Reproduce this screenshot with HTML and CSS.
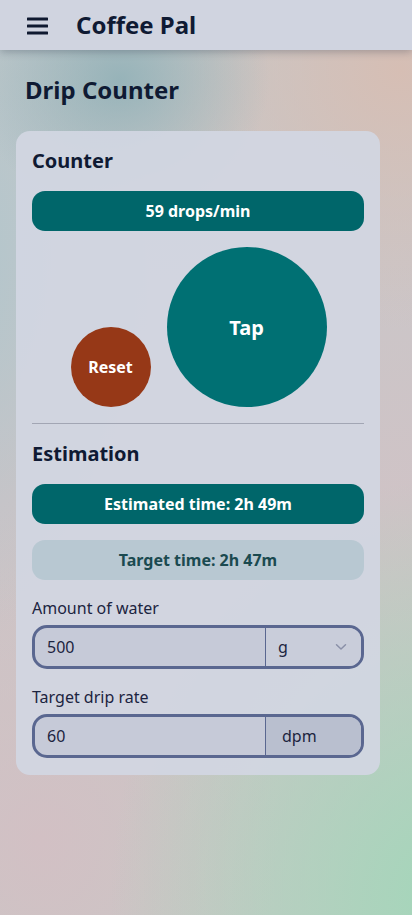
FILE: index.html
```html
<!DOCTYPE html>
<html lang="en">
<head>
<meta charset="utf-8">
<meta name="viewport" content="width=device-width, initial-scale=1">
<title>Coffee Pal</title>
<link rel="stylesheet" href="styles.css">
</head>
<body>
<header class="appbar">
  <svg class="menu-icon" width="21" height="18" viewBox="0 0 21 18" aria-hidden="true">
    <rect x="0" y="0.5" width="21" height="3" rx="0.6"/>
    <rect x="0" y="7.5" width="21" height="3" rx="0.6"/>
    <rect x="0" y="14.5" width="21" height="3" rx="0.6"/>
  </svg>
  <span class="app-title">Coffee Pal</span>
</header>
<main class="page">
  <h1 class="page-title">Drip Counter</h1>
  <section class="card">
    <h2 class="section-title">Counter</h2>
    <div class="pill pill-dark">59 drops/min</div>
    <div class="buttons">
      <button class="circle reset">Reset</button>
      <button class="circle tap">Tap</button>
    </div>
    <hr class="divider">
    <h2 class="section-title">Estimation</h2>
    <div class="pill pill-dark">Estimated time: 2h 49m</div>
    <div class="pill pill-light">Target time: 2h 47m</div>
    <div class="field">
      <label class="field-label">Amount of water</label>
      <div class="input-group">
        <span class="input-value">500</span>
        <span class="input-select">g
          <svg class="chevron" width="12" height="8" viewBox="0 0 12 8" aria-hidden="true"><path d="M1.5 1.8 L6 6 L10.5 1.8" fill="none" stroke="#8a90a8" stroke-width="1.5" stroke-linecap="round" stroke-linejoin="round"/></svg>
        </span>
      </div>
    </div>
    <div class="field">
      <label class="field-label">Target drip rate</label>
      <div class="input-group">
        <span class="input-value">60</span>
        <span class="input-addon">dpm</span>
      </div>
    </div>
  </section>
</main>
</body>
</html>
```
FILE: styles.css
```css
* { box-sizing: border-box; }

html, body {
  margin: 0;
  padding: 0;
}

body {
  width: 412px;
  min-height: 915px;
  font-family: "Noto Sans", "Open Sans", sans-serif;
  color: #111a36;
  background-color: #cdc6c9;
  background-image:
    radial-gradient(ellipse 150px 130px at 120px 80px, rgba(148, 178, 184, 0.95), rgba(148, 178, 184, 0) 100%),
    radial-gradient(ellipse 260px 260px at 400px 70px, rgba(214, 190, 180, 1), rgba(214, 190, 180, 0) 100%),
    radial-gradient(ellipse 180px 380px at -30px 260px, rgba(178, 198, 204, 1), rgba(178, 198, 204, 0) 100%),
    radial-gradient(ellipse 330px 420px at 440px 900px, rgba(164, 214, 186, 1), rgba(164, 214, 186, 0) 100%),
    radial-gradient(ellipse 240px 280px at 40px 840px, rgba(210, 192, 196, 1), rgba(210, 192, 196, 0) 100%),
    linear-gradient(180deg, #c6c9ca 0%, #cfc3c6 55%, #c9c8c6 100%);
}

.appbar {
  height: 50px;
  display: flex;
  align-items: center;
  gap: 28px;
  padding-left: 27px;
  background: #d0d4e0;
  box-shadow: 0 2px 8px rgba(40, 50, 70, 0.3);
  position: relative;
  z-index: 1;
}

.menu-icon {
  fill: #0f1930;
  flex: none;
  margin-top: 1px;
}

.app-title {
  font-size: 24px;
  font-weight: 700;
  color: #0f1a33;
  line-height: 1;
  margin-top: -1px;
}

.page {
  padding: 0 16px;
}

.page-title {
  margin: 0;
  padding: 24px 0 0 9px;
  font-size: 24px;
  font-weight: 700;
  line-height: 32px;
  color: #0f1a33;
  height: 81px;
}

.card {
  width: 364px;
  background: rgba(210, 214, 226, 0.93);
  border-radius: 14px;
  padding: 16px 16px 17px;
  display: flex;
  flex-direction: column;
  gap: 16px;
}

.section-title {
  margin: 0;
  font-size: 20px;
  font-weight: 700;
  line-height: 28px;
  color: #0f1a33;
}

.pill {
  height: 40px;
  border-radius: 13px;
  display: flex;
  align-items: center;
  justify-content: center;
  font-size: 16px;
  font-weight: 700;
}

.pill-dark {
  background: #00666a;
  color: #ffffff;
}

.pill-light {
  background: #b8c8d2;
  color: #1b4a50;
}

.buttons {
  display: flex;
  justify-content: center;
  align-items: flex-end;
  gap: 16px;
  padding-left: 1px;
}

.circle {
  border: none;
  border-radius: 50%;
  padding: 0;
  font-family: "Noto Sans", "Open Sans", sans-serif;
  font-weight: 700;
  color: #ffffff;
  display: flex;
  align-items: center;
  justify-content: center;
}

.reset {
  width: 80px;
  height: 80px;
  background: #963817;
  font-size: 16px;
}

.tap {
  width: 160px;
  height: 160px;
  background: #007073;
  font-size: 20px;
}

.divider {
  margin: 0;
  border: none;
  height: 1px;
  background: #a2a6b4;
}

.field {
  display: flex;
  flex-direction: column;
  gap: 6px;
  margin-top: 1px;
}

.field-label {
  font-size: 16px;
  line-height: 22px;
  color: #1c2440;
}

.input-group {
  height: 44px;
  border: 3px solid #5a6790;
  border-radius: 15px;
  display: flex;
  overflow: hidden;
  background: #c6cad8;
  font-size: 16px;
  color: #1c2440;
}

.input-value {
  width: 231px;
  flex: none;
  display: flex;
  align-items: center;
  padding-left: 12px;
  border-right: 1px solid #5a6790;
}

.input-select {
  flex: 1;
  display: flex;
  align-items: center;
  justify-content: space-between;
  padding: 0 14px 0 12px;
  background: #c9cdda;
}

.chevron {
  display: block;
}

.input-addon {
  flex: 1;
  display: flex;
  align-items: center;
  padding-left: 16px;
  background: #b9bfcf;
}
```
